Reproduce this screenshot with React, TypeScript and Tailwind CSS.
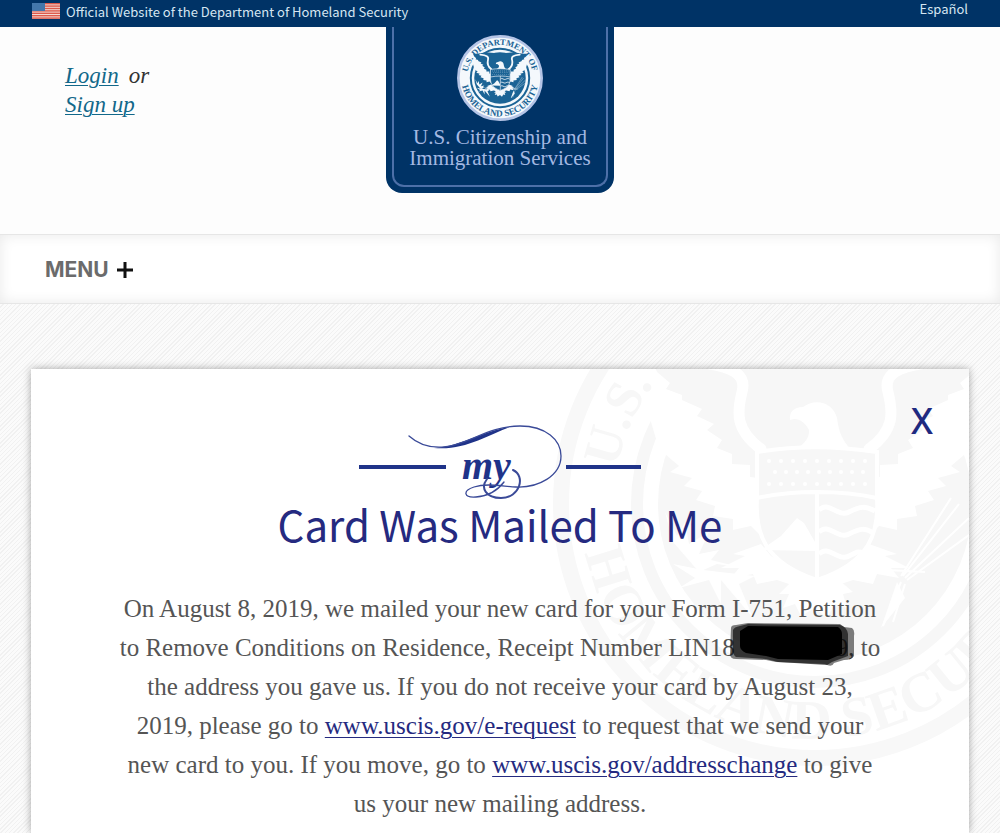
import React, { useId } from 'react';

interface SealProps {
  className?: string;
  rim: string;
  field: string;
  paper: string;
  lettering: string;
  topText: string;
}

const stars = [0, 1, 2, 3, 4, 5, 6, 7, 8];

// One half of the eagle, the other half is the same drawing mirrored
const Wing: React.FC<{ field: string; paper: string }> = ({ field, paper }) => (
  <g>
    <path
      fill={paper}
      d="M92 150L96 178 104 205 124 222 115 228 137 234 129 242 147 247 141 256 160 262 158 272 178 275 178 286 196 282 206 292V196L150 120 96 118Z"
    />
    <path
      fill={field}
      d="M96 112C124 116 160 98 206 106L260 110V206L203 206V234L195 233V221L177 220V210L162 204 167 196 152 186 159 180 142 172 147 165 127 156 127 151 111 145 115 139 102 128Z"
    />
    <path fill="none" stroke={paper} strokeWidth="11" strokeLinecap="round" d="M140 118C178 122 192 130 187 148C182 168 180 186 206 205" />
    <path fill={paper} d="M206 300L178 310 190 312 166 324 184 324 176 334 198 330 202 340 222 336 246 344 258 336 216 312Z" />
  </g>
);

const Seal: React.FC<SealProps> = ({ className, rim, field, paper, lettering, topText }) => {
  const id = useId();
  return (
    <svg className={className} viewBox="0 0 524 524" aria-hidden="true">
      <defs>
        <path id={`${id}-top`} d="M61 262A201 201 0 0 1 463 262" />
        <path id={`${id}-bottom`} d="M27 262A235 235 0 0 0 497 262" />
      </defs>
      <circle cx="262" cy="262" r="254" fill={paper} stroke={rim} strokeWidth="16" />
      <circle cx="262" cy="262" r="178" fill={paper} stroke={field} strokeWidth="12" />
      <circle cx="262" cy="262" r="157" fill={field} />
      <g transform="translate(2 2)">
        <Wing field={field} paper={paper} />
        <g transform="translate(520 0) scale(-1 1)">
          <Wing field={field} paper={paper} />
        </g>
      </g>
      {/* head */}
      <path
        fill={paper}
        d="M237 178C236 170 241 165 250 165C262 156 280 160 284 176C286 190 288 196 298 208L238 210C250 204 257 196 256 188C252 180 246 177 241 177Z"
      />
      {/* shield */}
      <path fill={field} stroke={paper} strokeWidth="4" d="M204 210C240 204 284 204 324 210V256C326 290 318 320 264 338C210 320 202 290 204 256Z" />
      <path fill="none" stroke={paper} strokeWidth="4" d="M204 256C240 248 288 248 324 256M264 250V336" />
      <path fill={paper} d="M208 308L228 294 244 276 251 281 262 300V309Z" />
      <path
        fill="none"
        stroke={paper}
        strokeWidth="5"
        d="M266 268C276 258 284 276 296 270S312 264 322 269M266 290C276 280 284 298 296 292S312 286 320 291M266 312C276 302 284 320 296 314S304 310 312 311"
      />
      {stars.map((n) => (
        <g key={n} fill={paper}>
          <circle cx={216 + n * 12} cy={219} r="2" />
          <circle cx={216 + n * 12} cy={242} r="2" />
          <circle cx={222 + n * 11} cy={230} r="2" />
        </g>
      ))}
      {/* tail */}
      <path fill={paper} d="M240 338L226 352 236 352 230 366 242 362 248 374 262 366 274 376 282 362 294 366 290 352 300 350 286 338Z" />
      {/* olive branch */}
      <g fill={paper}>
        <path d="M190 326L164 322 146 330 120 300 112 270 124 294 132 280 136 302 156 290 146 312 166 308 158 318Z" />
        <path d="M150 328L120 322 142 336 126 346 156 338 168 362 168 338 200 376 186 342 202 334Z" />
      </g>
      {/* arrows */}
      <g stroke={paper} strokeWidth="2" fill="none">
        <path d="M350 334L406 262M352 336L416 276M354 338L420 290M348 334L398 256M334 328L372 330M348 340L330 384M352 342L340 380" />
      </g>
      <path fill={paper} d="M344 340L328 386 352 356Z" />
      <g fill={lettering} className="font-['Liberation_Serif',serif] font-bold">
        <text className="text-[52px]">
          <textPath href={`#${id}-top`} startOffset="36">{topText}</textPath>
        </text>
        <text className="text-[56px]" textAnchor="middle">
          <textPath href={`#${id}-bottom`} startOffset="50%">HOMELAND SECURITY</textPath>
        </text>
      </g>
    </svg>
  );
};

const Flag: React.FC = () => (
  <svg className="h-4 w-7" viewBox="0 0 28 16" aria-hidden="true">
    <rect width="28" height="16" fill="#f3d9d3" />
    {[0, 1, 2, 3, 4, 5, 6].map((n) => (
      <rect key={n} y={n * 2.4} width="28" height="1.4" fill="#dd5a4b" />
    ))}
    <rect width="13" height="8" fill="#4377ab" />
  </svg>
);

const MyFlourish: React.FC = () => (
  <svg className="h-20 w-[284px]" viewBox="0 0 284 80" role="img" aria-label="my">
    <g fill="#1f3389">
      <rect x="1" y="43" width="87" height="4" />
      <rect x="208" y="43" width="75" height="4" />
      <path d="M76 26C104 24 124 9 152 5C130 13 106 29 76 26Z" />
      <text x="104" y="57" className="font-['Liberation_Serif',serif] text-[40px] font-bold italic">
        my
      </text>
    </g>
    <g fill="none" stroke="#3a4a98" strokeWidth="1.3" strokeLinecap="round">
      <path d="M51 14C62 24 74 26 86 25C110 23 130 4 162 4C188 4 203 18 203 34C203 54 180 66 158 65C142 64 128 61 116 65C104 69 106 76 118 75C130 74 140 68 146 60" />
      <path d="M155 48C168 54 162 76 143 76C128 76 122 66 129 57" strokeWidth="2" />
    </g>
  </svg>
);

// Marker scribble that hides the rest of the receipt number
const Redaction: React.FC = () => (
  <svg className="absolute left-1.5 -top-1.5 h-12 w-[128px]" viewBox="0 0 128 48" aria-hidden="true">
    <path fill="#000" opacity="0.5" d="M3 6Q3 3 8 3L20 1 112 2 116 5 124 6Q127 8 126 14V34Q124 38 116 38L106 41Q104 46 97 42L48 40 38 38 8 37Q2 37 2 32Z" />
    <path fill="#000" opacity="0.6" d="M5 8Q6 5 12 4L20 2 112 3Q119 5 120 12V34L104 40 99 43 50 40 38 37 8 35Q4 32 5 26Z" />
    <path fill="#000" d="M12 9L20 4 110 5Q114 8 114 12V32L100 38 50 37 38 34 18 31Q12 28 12 24Z" />
  </svg>
);

const App: React.FC = () => {
  return (
    <div className="flex min-h-screen flex-col bg-[#fdfdfd] font-['Noto_Sans_CJK_SC',sans-serif]">
      <div className="flex h-[27px] justify-between bg-[#003366] px-8 text-[13px] text-[#d5e6f2]">
        <div className="flex items-start gap-1.5 pt-[3px]">
          <Flag />
          <span className="leading-[18px]">Official Website of the Department of Homeland Security</span>
        </div>
        <a href="#" className="leading-[18px]">
          Español
        </a>
      </div>

      <header className="grid h-[207px] grid-cols-[1fr_228px_1fr] items-start">
        <div className="pl-[65px] pt-[34px] font-['Liberation_Serif',serif] text-[23px] italic leading-[29px] text-[#333]">
          <a href="#" className="text-[#12688a] underline decoration-1 underline-offset-2">Login</a>
          <span className="pl-2.5">or</span>
          <br />
          <a href="#" className="text-[#12688a] underline decoration-1 underline-offset-2">Sign up</a>
        </div>
        <a href="#" className="block h-[166px] rounded-b-2xl bg-[#003366] px-1.5 pb-1.5">
          <span className="flex h-full flex-col items-center rounded-b-xl border-2 border-t-0 border-[#4d70a8] pt-2">
            <Seal
              className="size-[86px]"
              rim="#b4c4e6"
              field="#1b6395"
              paper="#f4f8fc"
              lettering="#1b6395"
              topText="U.S. DEPARTMENT OF"
            />
            <span className="whitespace-nowrap pt-1.5 text-center font-['Liberation_Serif',serif] text-[21px] leading-[21px] text-[#a3b8e2]">
              U.S. Citizenship and
              <br />
              Immigration Services
            </span>
          </span>
        </a>
      </header>

      <nav className="flex h-[70px] items-center border-y border-[#e6e6e6] bg-white px-[45px] pt-0.5 shadow-[inset_0_0_14px_rgba(0,0,0,0.09)]">
        <button type="button" className="flex items-center gap-2 font-['Inter',sans-serif] text-[21px] font-bold text-[#6b6b6b]">
          MENU
          <svg className="size-4" viewBox="0 0 16 16" aria-hidden="true">
            <path d="M8 0V16M0 8H16" stroke="#111" strokeWidth="3" />
          </svg>
        </button>
      </nav>

      <main className="flex flex-1 flex-col bg-[repeating-linear-gradient(135deg,#fbfbfb_0px,#fbfbfb_2px,#f1f1f1_2px,#f1f1f1_3px)] px-[31px] pt-[65px]">
        <section className="relative flex-1 overflow-hidden bg-white px-20 pt-[53px] text-center shadow-[0_0_8px_rgba(0,0,0,0.35)]">
          <Seal
            className="absolute -right-[108px] -top-[127px] size-[524px]"
            rim="#f8f8f8"
            field="#f7f7f7"
            paper="#ffffff"
            lettering="#f7f7f7"
            topText="U.S."
          />
          <button
            type="button"
            aria-label="Close"
            className="absolute right-9 top-7 font-['Noto_Sans',sans-serif] text-[36px] font-medium leading-[48px] text-[#1f2a80]"
          >
            X
          </button>

          <div className="relative flex flex-col items-center">
            <MyFlourish />
            <h1 className="text-[42px] leading-[44px] text-[#252a80]">Card Was Mailed To Me</h1>
            <p className="pt-[43px] font-['Liberation_Serif',serif] text-[25px] leading-[39px] text-[#555]">
              On August 8, 2019, we mailed your new card for your Form I-751, Petition
              <br />
              to Remove Conditions on Residence, Receipt Number LIN1
              <span className="relative inline-flex w-[126px] justify-between">
                <span>8</span>
                <span>9</span>
                <Redaction />
              </span>
              , to
              <br />
              the address you gave us. If you do not receive your card by August 23,
              <br />
              2019, please go to{' '}
              <a href="#" className="text-[#252a80] underline decoration-1 underline-offset-3">www.uscis.gov/e-request</a> to request that we send your
              <br />
              new card to you. If you move, go to{' '}
              <a href="#" className="text-[#252a80] underline decoration-1 underline-offset-3">www.uscis.gov/addresschange</a> to give
              <br />
              us your new mailing address.
            </p>
          </div>
        </section>
      </main>
    </div>
  );
};

export default App;
